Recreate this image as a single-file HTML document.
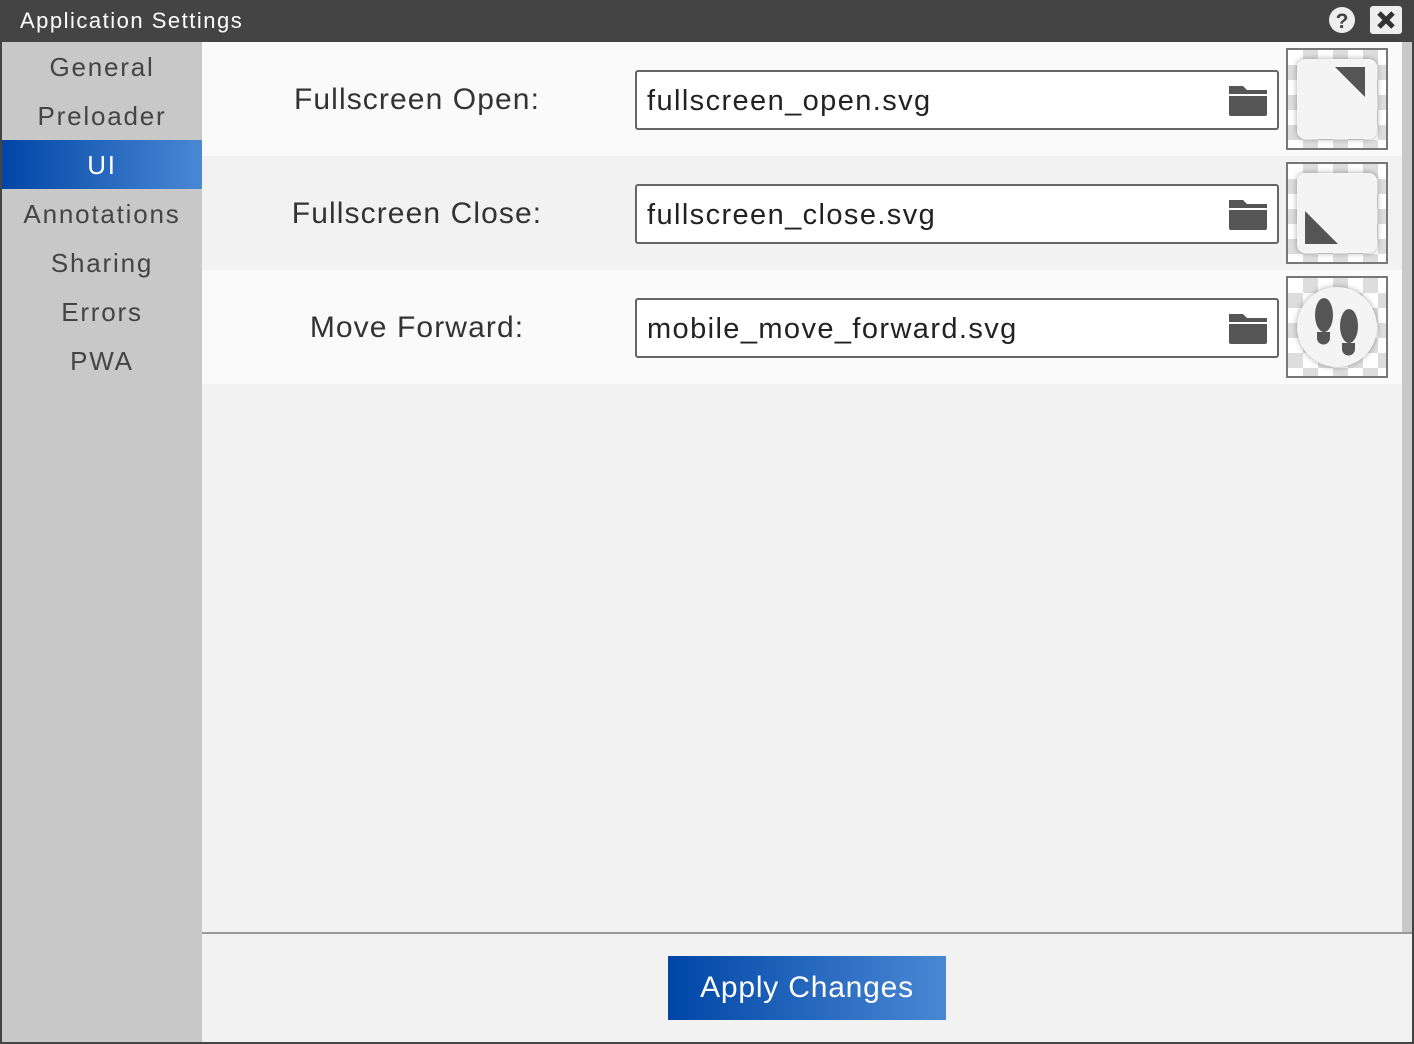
<!DOCTYPE html>
<html><head><style>
*{margin:0;padding:0;box-sizing:border-box}
body{width:1414px;height:1044px;background:#444;position:relative;overflow:hidden;font-family:"Liberation Sans",sans-serif}
.abs{position:absolute}
.title{left:20px;top:8px;color:#fff;font-size:22px;letter-spacing:1.5px}
.side{left:2px;top:42px;width:200px;height:1000px;background:#c8c8c8}
.nav{position:absolute;left:0;width:200px;text-align:center;font-size:26px;color:#444;height:49px;line-height:50px;letter-spacing:1.8px}
.sel{background:linear-gradient(90deg,#0046a6,#4a88d4);color:#fff}
.main{left:202px;top:42px;width:1210px;height:1000px;background:#f2f2f2}
.row{position:absolute;left:0;width:1200px;height:114px}
.lbl{position:absolute;width:430px;text-align:center;font-size:30px;color:#333;top:41px;letter-spacing:1.1px}
.inp{position:absolute;left:433px;top:28px;width:644px;height:60px;border:2px solid #666;border-radius:3px;background:#fff;font-size:29px;color:#222;padding-left:10px;line-height:58px;letter-spacing:1.4px}
.fold{position:absolute;right:8px;top:10px}
.prev{position:absolute;left:1084px;top:6px;width:102px;height:102px;border:2px solid #777;
background-color:#fff;background-image:linear-gradient(45deg,#ddd 25%,transparent 25%,transparent 75%,#ddd 75%),linear-gradient(45deg,#ddd 25%,transparent 25%,transparent 75%,#ddd 75%);background-size:30px 30px;background-position:0 0,15px 15px}
.tile{position:absolute;left:9px;top:9px;width:80px;height:80px;border-radius:8px;background:#f4f4f4;box-shadow:0 0 6px rgba(0,0,0,.35)}
.scroll{left:1402px;top:42px;width:10px;height:890px;background:#c8c8c8}
.foot{left:202px;top:932px;width:1210px;height:2px;background:#999}
.btn{left:668px;top:956px;width:278px;height:64px;background:linear-gradient(90deg,#0046a6,#4a88d4);color:#fff;font-size:30px;text-align:center;line-height:64px;letter-spacing:0.8px}
</style></head><body>
<div class="abs title">Application Settings</div>
<svg class="abs" style="left:1328px;top:6px" width="30" height="30"><circle cx="14" cy="14" r="13" fill="#eee"/><text x="14" y="22" text-anchor="middle" font-family="Liberation Sans" font-weight="bold" font-size="21" fill="#444">?</text></svg>
<div class="abs" style="left:1370px;top:6px;width:32px;height:28px;background:#eee;border-radius:3px"><svg width="32" height="28"><path d="M9 7 L23 21 M23 7 L9 21" stroke="#333" stroke-width="5"/></svg></div>
<div class="abs side">
<div class="nav" style="top:0">General</div>
<div class="nav" style="top:49px">Preloader</div>
<div class="nav sel" style="top:98px">UI</div>
<div class="nav" style="top:147px">Annotations</div>
<div class="nav" style="top:196px">Sharing</div>
<div class="nav" style="top:245px">Errors</div>
<div class="nav" style="top:294px">PWA</div>
</div>
<div class="abs main">
<div class="row" style="top:0;background:#fafafa"><div class="lbl">Fullscreen Open:</div>
<div class="inp">fullscreen_open.svg<svg class="fold" width="42" height="36"><path d="M2 4h14l4 4h20v4H2z M2 14h38v18a2 2 0 0 1-2 2H4a2 2 0 0 1-2-2z" fill="#555"/></svg></div>
<div class="prev"><div class="tile"><svg width="80" height="80"><path d="M38 8h30v30z" fill="#555"/></svg></div></div></div>
<div class="row" style="top:114px;background:#f2f2f2"><div class="lbl">Fullscreen Close:</div>
<div class="inp">fullscreen_close.svg<svg class="fold" width="42" height="36"><path d="M2 4h14l4 4h20v4H2z M2 14h38v18a2 2 0 0 1-2 2H4a2 2 0 0 1-2-2z" fill="#555"/></svg></div>
<div class="prev"><div class="tile"><svg width="80" height="80"><path d="M8 38v33h33z" fill="#555"/></svg></div></div></div>
<div class="row" style="top:228px;background:#fafafa"><div class="lbl">Move Forward:</div>
<div class="inp">mobile_move_forward.svg<svg class="fold" width="42" height="36"><path d="M2 4h14l4 4h20v4H2z M2 14h38v18a2 2 0 0 1-2 2H4a2 2 0 0 1-2-2z" fill="#555"/></svg></div>
<div class="prev"><div class="tile" style="border-radius:50%"><svg width="80" height="80"><ellipse cx="27" cy="28" rx="9" ry="17" fill="#555"/><path d="M20 45h13v6a6.5 6.5 0 0 1-13 0z" fill="#555"/><ellipse cx="52" cy="39" rx="9" ry="17" fill="#555"/><path d="M45 56h13v6a6.5 6.5 0 0 1-13 0z" fill="#555"/></svg></div></div></div>
</div>
<div class="abs scroll"></div>
<div class="abs foot"></div>
<div class="abs btn">Apply Changes</div>
</body></html>
